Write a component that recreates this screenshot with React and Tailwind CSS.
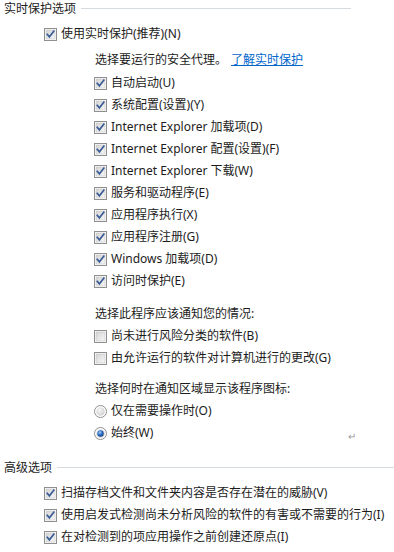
import React from 'react';

const AGENTS = [
  '自动启动(U)',
  '系统配置(设置)(Y)',
  'Internet Explorer 加载项(D)',
  'Internet Explorer 配置(设置)(F)',
  'Internet Explorer 下载(W)',
  '服务和驱动程序(E)',
  '应用程序执行(X)',
  '应用程序注册(G)',
  'Windows 加载项(D)',
  '访问时保护(E)',
];

const NOTIFY = ['尚未进行风险分类的软件(B)', '由允许运行的软件对计算机进行的更改(G)'];

const ADVANCED = [
  '扫描存档文件和文件夹内容是否存在潜在的威胁(V)',
  '使用启发式检测尚未分析风险的软件的有害或不需要的行为(I)',
  '在对检测到的项应用操作之前创建还原点(I)',
];

const CheckBox = ({ checked }) => (
  <svg width="13" height="13" viewBox="0 0 13 13" className="shrink-0">
    <defs>
      <linearGradient id={checked ? 'cbOn' : 'cbOff'} x1="0" y1="0" x2="1" y2="1">
        <stop offset="0" stopColor="#d4d4d4" />
        <stop offset="1" stopColor="#f8f8f8" />
      </linearGradient>
    </defs>
    <rect x="0.5" y="0.5" width="12" height="12" fill="#fff" stroke="#8f8f8f" />
    <rect x="2" y="2" width="9" height="9" fill={`url(#${checked ? 'cbOn' : 'cbOff'})`} stroke="#c4c4c4" strokeWidth="0.6" />
    {checked && (
      <path d="M3.3 6.4 L5.4 8.8 L9.8 3.2" fill="none" stroke="#3b5d96" strokeWidth="1.7" strokeLinecap="square" />
    )}
  </svg>
);

const Radio = ({ checked }) => (
  <svg width="13" height="13" viewBox="0 0 13 13" className="shrink-0">
    <defs>
      <radialGradient id="rdIn" cx="0.4" cy="0.35" r="0.7">
        <stop offset="0" stopColor="#f6f6f6" />
        <stop offset="1" stopColor="#cfcfcf" />
      </radialGradient>
      <radialGradient id="rdOn" cx="0.4" cy="0.35" r="0.7">
        <stop offset="0" stopColor="#a9d1f5" />
        <stop offset="0.5" stopColor="#2d6fc8" />
        <stop offset="1" stopColor="#14397a" />
      </radialGradient>
    </defs>
    <circle cx="6.5" cy="6.5" r="6" fill="#fff" stroke="#8f8f8f" />
    <circle cx="6.5" cy="6.5" r="4.3" fill="url(#rdIn)" />
    {checked && <circle cx="6.5" cy="6.5" r="3.2" fill="url(#rdOn)" />}
  </svg>
);

const Header = ({ title, lineEnd }) => (
  <div className="flex items-center h-[17px] pl-[4px]">
    <span>{title}</span>
    <div className={`flex-1 ml-[5px] border-t border-[#d6dbe0] ${lineEnd}`} />
  </div>
);

const Row = ({ children, className = '' }) => (
  <div className={`flex items-center h-[22px] gap-[4px] ${className}`}>{children}</div>
);

export default function App() {
  return (
    <div
      className="w-[394px] h-[552px] bg-white text-[12px] text-[#1c1c1c] overflow-hidden"
      style={{ fontFamily: '"Noto Sans", "Noto Sans CJK SC", sans-serif' }}
    >
      <Header title="实时保护选项" lineEnd="mr-[43px]" />

      <Row className="mt-[6px] pl-[44px]">
        <CheckBox checked />
        <span>使用实时保护(推荐)(N)</span>
      </Row>

      <div className="pl-[94px]">
        <Row className="mt-[4px] gap-[2px]">
          <span className="pl-[1px]">选择要运行的安全代理。</span>
          <span className="text-[#0066cc] underline">了解实时保护</span>
        </Row>

        <div className="mt-[1px]">
          {AGENTS.map((a) => (
            <Row key={a}>
              <CheckBox checked />
              <span>{a}</span>
            </Row>
          ))}
        </div>

        <Row className="mt-[11px]">
          <span className="pl-[1px]">选择此程序应该通知您的情况:</span>
        </Row>
        {NOTIFY.map((n) => (
          <Row key={n}>
            <CheckBox checked={false} />
            <span>{n}</span>
          </Row>
        ))}

        <Row className="mt-[9px]">
          <span className="pl-[1px]">选择何时在通知区域显示该程序图标:</span>
        </Row>
        <Row>
          <Radio checked={false} />
          <span>仅在需要操作时(O)</span>
        </Row>
        <Row>
          <Radio checked />
          <span>始终(W)</span>
          <span className="ml-auto mr-[38px] self-end text-[10px] text-[#9a9a9a]">↵</span>
        </Row>
      </div>

      <div className="mt-[15px]">
        <Header title="高级选项" lineEnd="" />
      </div>

      <div className="mt-[6px] pl-[44px]">
        {ADVANCED.map((a) => (
          <Row key={a}>
            <CheckBox checked />
            <span>{a}</span>
          </Row>
        ))}
      </div>
    </div>
  );
}
